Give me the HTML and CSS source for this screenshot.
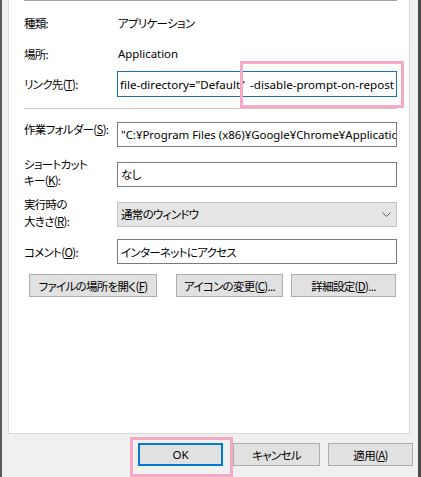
FILE: index.html
```html
<!DOCTYPE html>
<html lang="ja">
<head>
<meta charset="utf-8">
<title>プロパティ</title>
<link rel="stylesheet" href="styles.css">
</head>
<body>
<div class="window">
  <div class="panel">
    <div class="content">
      <div class="sep sep-top"></div>
      <div class="row info r-kind"><div class="lbl">種類:</div><div class="val">アプリケーション</div></div>
      <div class="row info r-place"><div class="lbl">場所:</div><div class="val latin">Application</div></div>
      <div class="row r-link">
        <div class="lbl">リンク先(<u>T</u>):</div>
        <div class="field focus"><span class="latin link-text">file-directory="Default" -disable-prompt-on-repost</span></div>
      </div>
      <div class="sep sep-mid"></div>
      <div class="row r-work">
        <div class="lbl lbl-work">作業フォルダー(<u>S</u>):</div>
        <div class="field"><span class="latin">"C:¥Program Files (x86)¥Google¥Chrome¥Applicatio</span></div>
      </div>
      <div class="row r-key">
        <div class="lbl lbl-key">ショートカット<br>キー(<u>K</u>):</div>
        <div class="field"><span>なし</span></div>
      </div>
      <div class="row r-run">
        <div class="lbl lbl-run">実行時の<br>大きさ(<u>R</u>):</div>
        <div class="field select"><span>通常のウィンドウ</span>
          <svg class="chev" width="9" height="5" viewBox="0 0 9 5"><polyline points="0.5,0.5 4.5,4.5 8.5,0.5" fill="none" stroke="#606060" stroke-width="1"/></svg>
        </div>
      </div>
      <div class="row r-comment">
        <div class="lbl">コメント(<u>O</u>):</div>
        <div class="field"><span>インターネットにアクセス</span></div>
      </div>
      <div class="btnrow">
        <div class="btn b-open">ファイルの場所を開く(<u>F</u>)</div>
        <div class="btn b-icon">アイコンの変更(<u>C</u>)...</div>
        <div class="btn b-adv">詳細設定(<u>D</u>)...</div>
      </div>
    </div>
  </div>
  <div class="footer">
    <div class="btn b-ok">OK</div>
    <div class="btn b-cancel">キャンセル</div>
    <div class="btn b-apply">適用(<u>A</u>)</div>
  </div>
  <div class="hl hl-link"></div>
  <div class="hl hl-ok"></div>
</div>
</body>
</html>
```

FILE: styles.css
```css
* { box-sizing: border-box; }
html, body { margin: 0; padding: 0; }
body {
  width: 421px;
  height: 477px;
  overflow: hidden;
  font-family: "Noto Sans CJK JP", sans-serif;
  font-size: 12px;
  color: #000;
  background: #f0f0f0;
}
.window {
  position: relative;
  width: 421px;
  height: 477px;
  background: #f0f0f0;
  border-left: 2px solid #5c5c5c;
  border-right: 3px solid #4a4a4a;
  padding: 0 8px 0 6px;
  display: flex;
  flex-direction: column;
}
.panel {
  width: 402px;
  height: 434px;
  background: #fff;
  border: 1px solid #d9d9d9;
  border-top: none;
  padding: 0 12px 0 15px;
}
.content { width: 373px; display: flex; flex-direction: column; }
.sep { height: 1px; background: #a0a0a0; }
.sep-mid { background: #c8c8c8; margin-top: 11px; }
.row {
  display: grid;
  grid-template-columns: 93px 280px;
  align-items: center;
}
.lbl, .val, .field, .btn {
  font-family: "Noto Sans CJK JP", sans-serif;
  font-feature-settings: "palt";
  font-size: 11.5px;
  letter-spacing: -0.7px;
  white-space: nowrap;
}
.lbl, .val { line-height: 16px; }
.latin, .field .latin {
  font-family: "Noto Sans", "Noto Sans CJK JP", sans-serif;
  font-feature-settings: normal;
  font-size: 11.4px;
  letter-spacing: 0;
}
.field .link-text { font-size: 11.6px; word-spacing: 2px; }
.val { padding-left: 1px; }
.r-kind { margin-top: 14px; }
.r-place { margin-top: 15px; }
.r-link { margin-top: 9px; }
.r-work { margin-top: 13px; }
.r-key { margin-top: 13px; }
.r-run { margin-top: 10px; }
.r-comment { margin-top: 9px; }
.lbl-work { align-self: start; margin-top: -1px; }
.lbl-key { align-self: start; margin-top: -4px; }
.lbl-run { align-self: start; margin-top: -2px; line-height: 17px; }
.field {
  height: 25px;
  border: 1px solid #7a7a7a;
  background: #fff;
  display: flex;
  align-items: center;
  padding: 0 3px 0 3px;
  overflow: hidden;
}
.focus { border-color: #1a6fb5; height: 26px; padding-left: 2px; }
.select {
  background: #e5e5e5;
  border-color: #c4c4c4;
  justify-content: space-between;
  padding-right: 5px;
}
.btnrow {
  display: flex;
  margin-top: 10px;
  padding-left: 5px;
}
.btn {
  height: 23px;
  background: #e1e1e1;
  border: 1px solid #adadad;
  display: flex;
  align-items: center;
  justify-content: center;
}
.b-open { width: 128px; }
.b-icon { width: 107px; margin-left: 19px; }
.b-adv { width: 105px; margin-left: 8px; }
.footer {
  display: flex;
  justify-content: flex-end;
  margin-top: 9px;
  margin-right: -3px;
}
.b-ok { width: 85px; border: 2px solid #0078d7; font-family: "Noto Sans", sans-serif; letter-spacing: 0; }
.b-cancel { width: 87px; margin-left: 10px; }
.b-apply { width: 85px; margin-left: 8px; }
.hl {
  position: absolute;
  border: 3px solid #f4aac6;
}
.hl-link { left: 238px; top: 61px; width: 164px; height: 47px; }
.hl-ok { left: 128px; top: 437px; width: 103px; height: 40px; }
```
